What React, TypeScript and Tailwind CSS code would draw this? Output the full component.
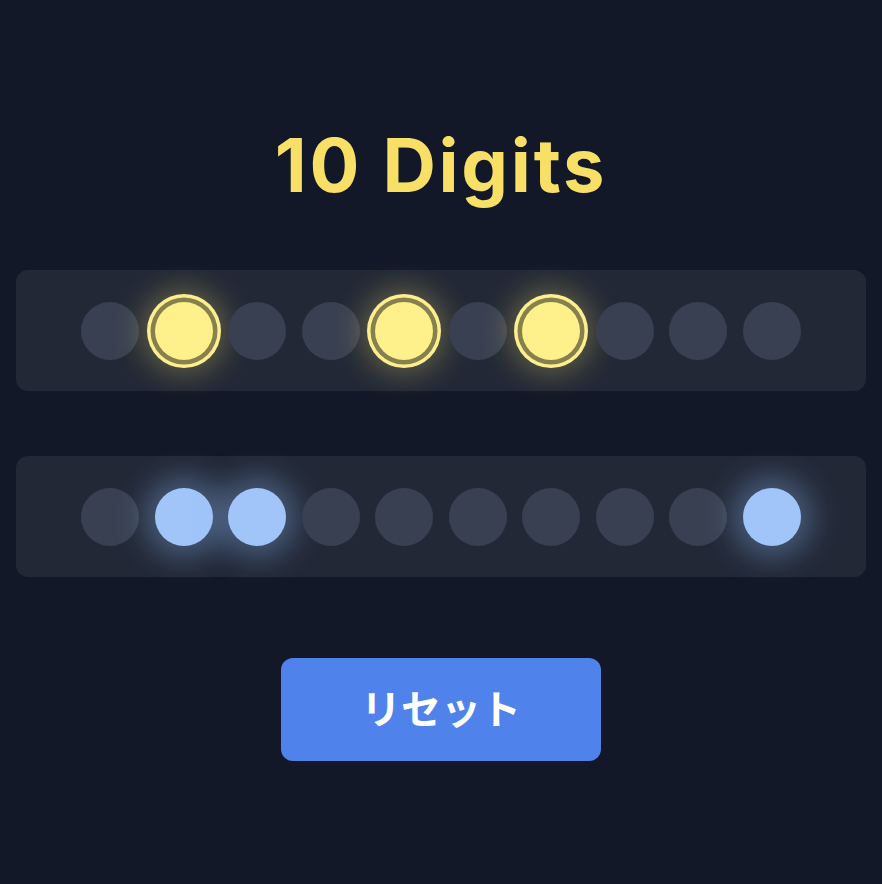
import React from 'react';

// which digits are lit in each row
const topRow = [false, true, false, false, true, false, true, false, false, false];
const bottomRow = [false, true, true, false, false, false, false, false, false, true];

const Dot = ({ on, kind }: { on: boolean; kind: 'yellow' | 'blue' }) => {
  if (!on) {
    return <div className="w-[58px] h-[58px] rounded-full bg-[#394051] shrink-0" />;
  }
  if (kind === 'yellow') {
    return (
      <div className="w-[58px] h-[58px] rounded-full bg-[#fef08a] shrink-0 shadow-[0_0_0_4.5px_#86804f,0_0_0_8px_#fdee8e,0_0_30px_14px_rgba(253,230,110,0.3)]" />
    );
  }
  return (
    <div className="w-[58px] h-[58px] rounded-full bg-[#a1c5f9] shrink-0 shadow-[0_0_30px_12px_rgba(147,190,253,0.35)]" />
  );
};

const Row = ({ digits, kind }: { digits: boolean[]; kind: 'yellow' | 'blue' }) => (
  <div className="mx-4 h-[121px] rounded-xl bg-[#222836] flex items-center justify-center gap-[15.5px]">
    {digits.map((on, i) => (
      <Dot key={i} on={on} kind={kind} />
    ))}
  </div>
);

const App = () => {
  return (
    <div
      className="min-h-screen w-full bg-[#121827] pt-[128px]"
      style={{ fontFamily: 'Inter, "Noto Sans CJK JP", sans-serif' }}
    >
      {/* Title */}
      <h1 className="text-center text-[74px] leading-none font-bold text-[#f8e067] tracking-[0.037em]">
        10 Digits
      </h1>

      <div className="mt-[68px]">
        <Row digits={topRow} kind="yellow" />
      </div>
      <div className="mt-[65px]">
        <Row digits={bottomRow} kind="blue" />
      </div>

      <div className="mt-[81px] flex justify-center">
        <button className="w-[320px] h-[103px] rounded-xl bg-[#4f82eb] text-white text-[40px] font-bold">
          リセット
        </button>
      </div>
    </div>
  );
};

export default App;
